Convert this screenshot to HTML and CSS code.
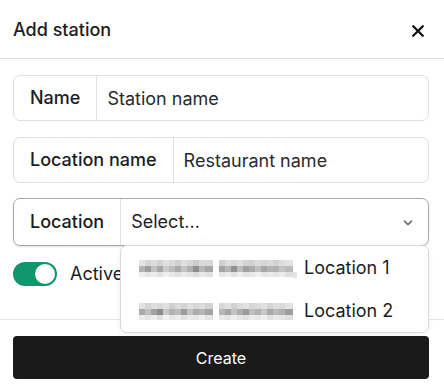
FILE: index.html
```html
<!doctype html>
<html lang="en">
<head>
    <meta charset="UTF-8">
    <meta name="viewport" content="width=device-width, initial-scale=1.0">
    <title>Add station</title>
    <link rel="stylesheet" href="styles.css">
</head>
<body>
<div class="modal">
    <div class="modal-head">
        <h2 class="modal-title">Add station</h2>
        <button class="close-btn" type="button" aria-label="Close">
            <svg width="14" height="14" viewBox="0 0 14 14"><path d="M2.2 2.2L11.8 11.8M11.8 2.2L2.2 11.8" stroke="#111" stroke-width="2.3" stroke-linecap="round"/></svg>
        </button>
    </div>
    <div class="modal-body">
        <div class="field">
            <label class="field-label" for="stationName">Name</label>
            <input class="field-input" id="stationName" type="text" placeholder="Station name">
        </div>
        <div class="field">
            <label class="field-label" for="locationName">Location name</label>
            <input class="field-input" id="locationName" type="text" placeholder="Restaurant name">
        </div>
        <div class="field field-select is-open">
            <span class="field-label">Location</span>
            <div class="select-box">
                <span class="select-value">Select...</span>
                <svg class="chevron" width="10" height="6" viewBox="0 0 10 6"><path d="M1.5 1.2L5 4.6L8.5 1.2" fill="none" stroke="#71717a" stroke-width="1.7" stroke-linecap="round" stroke-linejoin="round"/></svg>
            </div>
            <ul class="dropdown">
                <li class="option">
                    <svg class="blur" width="160" height="18" viewBox="0 0 160 18">
                        <g>
                            <rect x="0" y="0" width="6" height="6" fill="#e4e4e4"/><rect x="6" y="0" width="6" height="6" fill="#d6d6d6"/><rect x="12" y="0" width="6" height="6" fill="#dcdcdc"/><rect x="18" y="0" width="6" height="6" fill="#d2d2d2"/><rect x="24" y="0" width="6" height="6" fill="#e0e0e0"/><rect x="30" y="0" width="6" height="6" fill="#dadada"/><rect x="36" y="0" width="6" height="6" fill="#d0d0d0"/><rect x="42" y="0" width="6" height="6" fill="#dedede"/><rect x="48" y="0" width="6" height="6" fill="#d6d6d6"/><rect x="54" y="0" width="6" height="6" fill="#cccccc"/><rect x="60" y="0" width="6" height="6" fill="#dadada"/><rect x="66" y="0" width="8" height="6" fill="#d8d8d8"/>
                            <rect x="0" y="6" width="6" height="6" fill="#b4b4b4"/><rect x="6" y="6" width="6" height="6" fill="#9e9e9e"/><rect x="12" y="6" width="6" height="6" fill="#c2c2c2"/><rect x="18" y="6" width="6" height="6" fill="#a8a8a8"/><rect x="24" y="6" width="6" height="6" fill="#cbcbcb"/><rect x="30" y="6" width="6" height="6" fill="#bcbcbc"/><rect x="36" y="6" width="6" height="6" fill="#aaaaaa"/><rect x="42" y="6" width="6" height="6" fill="#c4c4c4"/><rect x="48" y="6" width="6" height="6" fill="#b0b0b0"/><rect x="54" y="6" width="6" height="6" fill="#8e8e8e"/><rect x="60" y="6" width="6" height="6" fill="#b8b8b8"/><rect x="66" y="6" width="8" height="6" fill="#a6a6a6"/>
                            <rect x="0" y="12" width="6" height="5" fill="#efefef"/><rect x="6" y="12" width="6" height="5" fill="#e6e6e6"/><rect x="12" y="12" width="6" height="5" fill="#ececec"/><rect x="18" y="12" width="6" height="5" fill="#e2e2e2"/><rect x="24" y="12" width="6" height="5" fill="#f0f0f0"/><rect x="30" y="12" width="6" height="5" fill="#e8e8e8"/><rect x="36" y="12" width="6" height="5" fill="#e0e0e0"/><rect x="42" y="12" width="6" height="5" fill="#eaeaea"/><rect x="48" y="12" width="6" height="5" fill="#e4e4e4"/><rect x="54" y="12" width="6" height="5" fill="#dcdcdc"/><rect x="60" y="12" width="6" height="5" fill="#e8e8e8"/><rect x="66" y="12" width="8" height="5" fill="#e2e2e2"/>
                        </g>
                        <g transform="translate(80 0)">
                            <rect x="0" y="0" width="6" height="6" fill="#d0d0d0"/><rect x="6" y="0" width="6" height="6" fill="#dedede"/><rect x="12" y="0" width="6" height="6" fill="#d8d8d8"/><rect x="18" y="0" width="6" height="6" fill="#e0e0e0"/><rect x="24" y="0" width="6" height="6" fill="#d4d4d4"/><rect x="30" y="0" width="6" height="6" fill="#d0d0d0"/><rect x="36" y="0" width="6" height="6" fill="#dcdcdc"/><rect x="42" y="0" width="6" height="6" fill="#d6d6d6"/><rect x="48" y="0" width="6" height="6" fill="#dadada"/><rect x="54" y="0" width="6" height="6" fill="#d2d2d2"/><rect x="60" y="0" width="6" height="6" fill="#dedede"/><rect x="66" y="0" width="8" height="6" fill="#e2e2e2"/>
                            <rect x="0" y="6" width="6" height="6" fill="#a4a4a4"/><rect x="6" y="6" width="6" height="6" fill="#b6b6b6"/><rect x="12" y="6" width="6" height="6" fill="#929292"/><rect x="18" y="6" width="6" height="6" fill="#bdbdbd"/><rect x="24" y="6" width="6" height="6" fill="#a0a0a0"/><rect x="30" y="6" width="6" height="6" fill="#acacac"/><rect x="36" y="6" width="6" height="6" fill="#c0c0c0"/><rect x="42" y="6" width="6" height="6" fill="#a8a8a8"/><rect x="48" y="6" width="6" height="6" fill="#b4b4b4"/><rect x="54" y="6" width="6" height="6" fill="#b0b0b0"/><rect x="60" y="6" width="6" height="6" fill="#c4c4c4"/><rect x="66" y="6" width="8" height="6" fill="#bababa"/>
                            <rect x="0" y="12" width="6" height="5" fill="#e6e6e6"/><rect x="6" y="12" width="6" height="5" fill="#ececec"/><rect x="12" y="12" width="6" height="5" fill="#e2e2e2"/><rect x="18" y="12" width="6" height="5" fill="#eeeeee"/><rect x="24" y="12" width="6" height="5" fill="#e4e4e4"/><rect x="30" y="12" width="6" height="5" fill="#e8e8e8"/><rect x="36" y="12" width="6" height="5" fill="#f0f0f0"/><rect x="42" y="12" width="6" height="5" fill="#e6e6e6"/><rect x="48" y="12" width="6" height="5" fill="#eaeaea"/><rect x="54" y="12" width="6" height="5" fill="#e4e4e4"/><rect x="60" y="12" width="6" height="5" fill="#ececec"/><rect x="66" y="12" width="8" height="5" fill="#e0e0e0"/>
                            <rect x="74" y="12" width="4" height="6" fill="#e4e4e4"/>
                        </g>
                    </svg>
                    <span>Location 1</span>
                </li>
                <li class="option">
                    <svg class="blur" width="160" height="18" viewBox="0 0 160 18">
                        <rect x="0" y="0" width="6" height="6" fill="#e2e2e2"/><rect x="6" y="0" width="6" height="6" fill="#d4d4d4"/><rect x="12" y="0" width="6" height="6" fill="#dedede"/><rect x="18" y="0" width="6" height="6" fill="#d8d8d8"/><rect x="24" y="0" width="6" height="6" fill="#e0e0e0"/><rect x="30" y="0" width="6" height="6" fill="#d0d0d0"/><rect x="36" y="0" width="6" height="6" fill="#dadada"/><rect x="42" y="0" width="6" height="6" fill="#d4d4d4"/><rect x="48" y="0" width="6" height="6" fill="#dedede"/><rect x="54" y="0" width="6" height="6" fill="#d6d6d6"/><rect x="60" y="0" width="6" height="6" fill="#dcdcdc"/><rect x="66" y="0" width="8" height="6" fill="#d2d2d2"/>
                        <rect x="0" y="6" width="6" height="6" fill="#aaaaaa"/><rect x="6" y="6" width="6" height="6" fill="#c0c0c0"/><rect x="12" y="6" width="6" height="6" fill="#a2a2a2"/><rect x="18" y="6" width="6" height="6" fill="#8c8c8c"/><rect x="24" y="6" width="6" height="6" fill="#c8c8c8"/><rect x="30" y="6" width="6" height="6" fill="#b2b2b2"/><rect x="36" y="6" width="6" height="6" fill="#bcbcbc"/><rect x="42" y="6" width="6" height="6" fill="#9c9c9c"/><rect x="48" y="6" width="6" height="6" fill="#c2c2c2"/><rect x="54" y="6" width="6" height="6" fill="#acacac"/><rect x="60" y="6" width="6" height="6" fill="#b6b6b6"/><rect x="66" y="6" width="8" height="6" fill="#a4a4a4"/>
                        <rect x="0" y="12" width="6" height="5" fill="#ececec"/><rect x="6" y="12" width="6" height="5" fill="#e4e4e4"/><rect x="12" y="12" width="6" height="5" fill="#eeeeee"/><rect x="18" y="12" width="6" height="5" fill="#e0e0e0"/><rect x="24" y="12" width="6" height="5" fill="#f2f2f2"/><rect x="30" y="12" width="6" height="5" fill="#e6e6e6"/><rect x="36" y="12" width="6" height="5" fill="#ececec"/><rect x="42" y="12" width="6" height="5" fill="#e2e2e2"/><rect x="48" y="12" width="6" height="5" fill="#eaeaea"/><rect x="54" y="12" width="6" height="5" fill="#e6e6e6"/><rect x="60" y="12" width="6" height="5" fill="#eeeeee"/><rect x="66" y="12" width="8" height="5" fill="#e4e4e4"/>
                        <g transform="translate(80 0)">
                            <rect x="0" y="0" width="6" height="6" fill="#d8d8d8"/><rect x="6" y="0" width="6" height="6" fill="#e0e0e0"/><rect x="12" y="0" width="6" height="6" fill="#d2d2d2"/><rect x="18" y="0" width="6" height="6" fill="#dcdcdc"/><rect x="24" y="0" width="6" height="6" fill="#e2e2e2"/><rect x="30" y="0" width="6" height="6" fill="#d6d6d6"/><rect x="36" y="0" width="6" height="6" fill="#dadada"/><rect x="42" y="0" width="6" height="6" fill="#e0e0e0"/><rect x="48" y="0" width="6" height="6" fill="#d4d4d4"/><rect x="54" y="0" width="6" height="6" fill="#dedede"/><rect x="60" y="0" width="6" height="6" fill="#d8d8d8"/><rect x="66" y="0" width="8" height="6" fill="#e2e2e2"/>
                            <rect x="0" y="6" width="6" height="6" fill="#b8b8b8"/><rect x="6" y="6" width="6" height="6" fill="#a6a6a6"/><rect x="12" y="6" width="6" height="6" fill="#c2c2c2"/><rect x="18" y="6" width="6" height="6" fill="#aeaeae"/><rect x="24" y="6" width="6" height="6" fill="#9a9a9a"/><rect x="30" y="6" width="6" height="6" fill="#bebebe"/><rect x="36" y="6" width="6" height="6" fill="#b2b2b2"/><rect x="42" y="6" width="6" height="6" fill="#c6c6c6"/><rect x="48" y="6" width="6" height="6" fill="#a8a8a8"/><rect x="54" y="6" width="6" height="6" fill="#bababa"/><rect x="60" y="6" width="6" height="6" fill="#b0b0b0"/><rect x="66" y="6" width="8" height="6" fill="#9e9e9e"/>
                            <rect x="0" y="12" width="6" height="5" fill="#eaeaea"/><rect x="6" y="12" width="6" height="5" fill="#e4e4e4"/><rect x="12" y="12" width="6" height="5" fill="#eeeeee"/><rect x="18" y="12" width="6" height="5" fill="#e6e6e6"/><rect x="24" y="12" width="6" height="5" fill="#e0e0e0"/><rect x="30" y="12" width="6" height="5" fill="#ececec"/><rect x="36" y="12" width="6" height="5" fill="#e8e8e8"/><rect x="42" y="12" width="6" height="5" fill="#f0f0f0"/><rect x="48" y="12" width="6" height="5" fill="#e2e2e2"/><rect x="54" y="12" width="6" height="5" fill="#eaeaea"/><rect x="60" y="12" width="6" height="5" fill="#e6e6e6"/><rect x="66" y="12" width="8" height="5" fill="#dedede"/>
                        </g>
                    </svg>
                    <span>Location 2</span>
                </li>
            </ul>
        </div>
        <label class="toggle-row">
            <span class="toggle is-on"><span class="toggle-knob"></span></span>
            <span class="toggle-text">Active</span>
        </label>
    </div>
    <div class="modal-foot">
        <button class="create-btn" type="button">Create</button>
    </div>
</div>
</body>
</html>
```

FILE: styles.css
```css
/* reset */
body, h2, ul, li, button, input {
    margin: 0;
    padding: 0;
}
ul { list-style: none; }
* { box-sizing: border-box; }

body {
    background: #fff;
    color: #1c1c1e;
    font: 18px/1.2 Inter, "Noto Sans", sans-serif;
}

/* modal */
.modal {
    width: 444px;
    height: 392px;
    background: #fff;
}
.modal-head {
    height: 59px;
    display: flex;
    align-items: center;
    justify-content: space-between;
    padding: 0 19px 0 13px;
    border-bottom: 1px solid #dcdce2;
}
.modal-title {
    font-size: 18px;
    font-weight: 500;
    color: #1c1c1e;
    padding-top: 1px;
}
.close-btn {
    width: 14px;
    height: 14px;
    border: none;
    background: none;
    display: flex;
    margin-top: 3px;
}

.modal-body {
    padding: 16px 15px 33px 13px;
    display: flex;
    flex-direction: column;
    gap: 16px;
    border-bottom: 1px solid #e6e6ea;
}

/* input group */
.field {
    display: flex;
    height: 46px;
    border: 1px solid #dcdce2;
    border-radius: 7px;
    position: relative;
}
.field-label {
    display: flex;
    align-items: center;
    padding: 0 16px;
    border-right: 1px solid #e2e2e6;
    font-weight: 500;
    color: #1c1c1e;
    white-space: nowrap;
}
.field-input {
    flex: 1;
    min-width: 0;
    border: none;
    background: none;
    outline: none;
    padding-left: 10px;
    font: 18px Inter, "Noto Sans", sans-serif;
    color: #1c1c1e;
}
.field-input::placeholder { color: #2a2a2e; }

.field-select {
    height: 48px;
    margin-top: -1px;
    border-color: #a6a8b0;
    box-shadow: 0 1px 2px rgba(0, 0, 0, .12);
}
.select-box {
    flex: 1;
    display: flex;
    align-items: center;
    justify-content: space-between;
    padding: 0 15px 0 10px;
}
.select-value { color: #1c1c1e; }
.chevron { margin-top: 1px; }

/* dropdown */
.dropdown {
    position: absolute;
    top: 46px;
    left: 106px;
    right: -1px;
    height: 88px;
    background: #fff;
    border: 1px solid #d8d8de;
    border-radius: 7px;
    box-shadow: 0 2px 6px rgba(0, 0, 0, .06);
    z-index: 5;
}
.option {
    height: 43px;
    display: flex;
    align-items: center;
    padding-left: 18px;
    color: #1c1c1e;
}
.option .blur {
    width: 160px;
    height: 18px;
    margin: 3px 5px 0 0;
    flex: none;
}

/* toggle */
.toggle-row {
    display: flex;
    align-items: center;
    gap: 13px;
    height: 24px;
}
.toggle {
    width: 44px;
    height: 24px;
    border-radius: 12px;
    background: #11956a;
    display: flex;
    align-items: center;
    justify-content: flex-end;
    padding: 2px;
}
.toggle-knob {
    width: 20px;
    height: 20px;
    border-radius: 50%;
    background: #fff;
}
.toggle-text {
    color: #1c1c1e;
}

/* footer */
.modal-foot {
    padding: 16px 15px 0 13px;
}
.create-btn {
    width: 100%;
    height: 43px;
    border: none;
    border-radius: 4px;
    background: #1a1a1a;
    color: #fff;
    font: 16px Inter, "Noto Sans", sans-serif;
}
```
